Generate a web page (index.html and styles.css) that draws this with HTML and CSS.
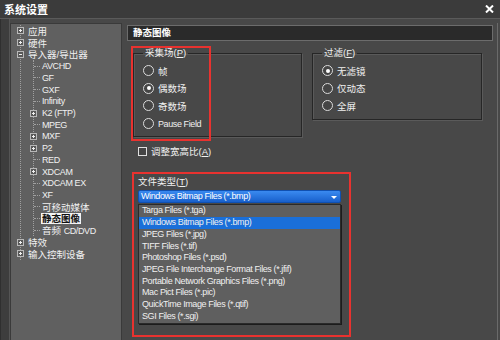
FILE: index.html
```html
<!DOCTYPE html>
<html lang="zh-CN">
<head>
    <meta charset="UTF-8">
    <title>系统设置</title>
    <link rel="stylesheet" href="styles.css">
</head>
<body>
    <div class="window">
        <div class="titlebar">
            <span class="title">系统设置</span>
            <svg class="close" width="9" height="8" viewBox="0 0 9 8"><path d="M1 0.5l7 7M8 0.5l-7 7" stroke="#fff" stroke-width="2"/></svg>
        </div>

        <div class="main">
            <div class="side"></div>

            <div class="tree-panel">
                <div class="tree-root">
                    <div class="node"><span class="exp plus"></span><span class="label">应用</span></div>
                    <div class="node"><span class="exp plus"></span><span class="label">硬件</span></div>
                    <div class="node"><span class="exp minus"></span><span class="label">导入器/导出器</span></div>
                    <div class="children">
                        <div class="leaf"><span class="label en">AVCHD</span></div>
                        <div class="leaf"><span class="label en">GF</span></div>
                        <div class="leaf"><span class="label en">GXF</span></div>
                        <div class="leaf"><span class="label en">Infinity</span></div>
                        <div class="node sub"><span class="exp plus"></span><span class="label en">K2 (FTP)</span></div>
                        <div class="leaf"><span class="label en">MPEG</span></div>
                        <div class="node sub"><span class="exp plus"></span><span class="label en">MXF</span></div>
                        <div class="node sub"><span class="exp plus"></span><span class="label en">P2</span></div>
                        <div class="leaf"><span class="label en">RED</span></div>
                        <div class="node sub"><span class="exp plus"></span><span class="label en">XDCAM</span></div>
                        <div class="leaf"><span class="label en">XDCAM EX</span></div>
                        <div class="leaf"><span class="label en">XF</span></div>
                        <div class="leaf"><span class="label">可移动媒体</span></div>
                        <div class="leaf"><span class="label selected">静态图像</span></div>
                        <div class="leaf"><span class="label">音频 <span class="en">CD/DVD</span></span></div>
                    </div>
                    <div class="node"><span class="exp plus"></span><span class="label">特效</span></div>
                    <div class="node"><span class="exp plus"></span><span class="label">输入控制设备</span></div>
                </div>
            </div>

            <div class="panel">
                <div class="panel-header">静态图像</div>

                <div class="groups">
                    <fieldset class="group group-field">
                        <legend>采集场(<u>P</u>)</legend>
                        <div class="radio"><span class="dot"></span>帧</div>
                        <div class="radio"><span class="dot on"></span>偶数场</div>
                        <div class="radio"><span class="dot"></span>奇数场</div>
                        <div class="radio"><span class="dot"></span><span class="en">Pause Field</span></div>
                    </fieldset>
                    <fieldset class="group group-filter">
                        <legend>过滤(<u>F</u>)</legend>
                        <div class="radio"><span class="dot on"></span>无滤镜</div>
                        <div class="radio"><span class="dot"></span>仅动态</div>
                        <div class="radio"><span class="dot"></span>全屏</div>
                    </fieldset>
                </div>

                <div class="check"><span class="box"></span>调整宽高比(<u>A</u>)</div>

                <div class="filetype">
                    <div class="filetype-label">文件类型(<u>T</u>)</div>
                    <div class="select"><span class="en">Windows Bitmap Files (*.bmp)</span><span class="arrow"></span></div>
                    <ul class="options">
                        <li class="en">Targa Files (*.tga)</li>
                        <li class="en active">Windows Bitmap Files (*.bmp)</li>
                        <li class="en">JPEG Files (*.jpg)</li>
                        <li class="en">TIFF Files (*.tif)</li>
                        <li class="en">Photoshop Files (*.psd)</li>
                        <li class="en">JPEG File Interchange Format Files (*.jfif)</li>
                        <li class="en">Portable Network Graphics Files (*.png)</li>
                        <li class="en">Mac Pict Files (*.pic)</li>
                        <li class="en">QuickTime Image Files (*.qtif)</li>
                        <li class="en">SGI Files (*.sgi)</li>
                    </ul>
                </div>

                <!-- red annotation frames -->
                <div class="mark mark-field"></div>
                <div class="mark mark-type"></div>
            </div>
        </div>
    </div>
</body>
</html>
```

FILE: styles.css
```css
body {
    margin: 0;
    background-color: #484848;
    color: #f0f0f0;
    font-family: "Liberation Sans", "Noto Sans CJK SC", sans-serif;
    font-size: 9.5px;
}
u {
    text-decoration: underline;
}
.en {
    font-size: 9px;
    letter-spacing: -0.4px;
}
.window {
    width: 500px;
    height: 340px;
    overflow: hidden;
    display: flex;
    flex-direction: column;
}
.titlebar {
    height: 18px;
    flex-shrink: 0;
    background-color: #3b3b3b;
    border-bottom: 1px solid #5a5a5a;
    display: flex;
    align-items: center;
    justify-content: space-between;
    padding: 0 6px 0 4px;
}
.title {
    font-weight: bold;
    font-size: 11px;
    color: #fff;
}
.close {
    margin-top: -1px;
}
.main {
    flex: 1;
    display: flex;
    padding-top: 4px;
    padding-right: 2px;
    background-color: #484848;
}
.side {
    width: 8px;
    margin-top: -4px;
    background-color: #3d3d3d;
    border-right: 1px solid #555;
    border-left: 1px solid #2f2f2f;
}

/* tree */
.tree-panel {
    width: 110px;
    background-color: #606060;
    border: 1px solid #3a3a3a;
    border-bottom: none;
    padding-top: 1px;
}
.tree-root {
    margin-left: 9px;
    border-left: 1px dotted #a0a0a0;
    margin-top: 5px;
    width: 95px;
}
.node, .leaf {
    height: 11.74px;
    display: flex;
    align-items: center;
    white-space: nowrap;
}
.tree-root > .node:first-child {
    margin-top: -5px;
}
.exp {
    width: 5px;
    height: 5px;
    flex-shrink: 0;
    margin-left: -4px;
    margin-right: 4px;
    border: 1px solid #b8b8b8;
    background-color: #585858;
    position: relative;
}
.exp::before {
    content: "";
    position: absolute;
    left: 1px;
    top: 2px;
    width: 3px;
    height: 1px;
    background-color: #f0f0f0;
}
.exp.plus::after {
    content: "";
    position: absolute;
    left: 2px;
    top: 1px;
    width: 1px;
    height: 3px;
    background-color: #f0f0f0;
}
.children {
    margin-left: 12px;
    border-left: 1px dotted #a0a0a0;
}
.sub .exp {
    margin-left: -4px;
    margin-right: 5px;
}
.leaf::before {
    content: "";
    width: 6px;
    border-top: 1px dotted #a0a0a0;
    margin-right: 2px;
}
.label.selected {
    background-color: #f4f4f4;
    color: #111;
    font-weight: bold;
    padding: 0 1px;
    margin-left: -1px;
    line-height: 11px;
}

/* right panel */
.panel {
    flex: 1;
    position: relative;
    padding: 2px 4px 0 5px;
    border-right: 1px solid #6a6a6a;
}
.panel-header {
    height: 14px;
    line-height: 14px;
    background-color: #2a2a2a;
    border: 1px solid #6c6c6c;
    padding-left: 5px;
    font-weight: bold;
    color: #fff;
}
.groups {
    display: flex;
    align-items: flex-start;
    gap: 10px;
    margin: 6px 0 0 6px;
}
.group {
    margin: 0;
    padding: 3px 0 4px 9px;
    border: 1px solid #262626;
    box-shadow: 1px 1px 0 #5a5a5a, inset 1px 1px 0 #5a5a5a;
    min-width: 0;
}
.group legend {
    padding: 0 2px;
    line-height: 12px;
}
.group-field {
    width: 158px;
}
.group-filter {
    width: 159px;
}
.radio {
    height: 17.6px;
    display: flex;
    align-items: center;
}
.dot {
    width: 9px;
    height: 9px;
    border: 1px solid #dcdcdc;
    border-radius: 50%;
    background-color: #454545;
    margin-right: 4px;
    display: flex;
    align-items: center;
    justify-content: center;
}
.dot.on::after {
    content: "";
    width: 4px;
    height: 4px;
    border-radius: 50%;
    background-color: #fff;
}
.check {
    display: flex;
    align-items: center;
    height: 12px;
    margin: 8px 0 0 11px;
}
.box {
    width: 7px;
    height: 7px;
    border: 1px solid #e0e0e0;
    background-color: #454545;
    margin-right: 4px;
}
.filetype {
    margin: 19px 0 0 11px;
    width: 203px;
}
.filetype-label {
    height: 12px;
    line-height: 12px;
    margin-bottom: 2px;
}
.select {
    height: 11px;
    line-height: 11px;
    padding-left: 2px;
    background: linear-gradient(#3a8af0, #1860cc);
    border: 1px solid #1050b0;
    border-radius: 2px;
    color: #fff;
    display: flex;
    justify-content: space-between;
    align-items: center;
}
.arrow {
    width: 0;
    height: 0;
    border-left: 3px solid transparent;
    border-right: 3px solid transparent;
    border-top: 3px solid #fff;
    margin-right: 3px;
    margin-top: 1px;
}
.options {
    list-style: none;
    margin: 1px 0 0 0;
    padding: 0;
    background-color: #5f5f5f;
    border: 1px solid #2a2a2a;
    box-shadow: 1px 1px 0 #1c1c1c;
}
.options li {
    height: 11.73px;
    line-height: 11.73px;
    padding-left: 3px;
    white-space: nowrap;
}
.options li.active {
    background-color: #1a6fd9;
}
.mark {
    position: absolute;
    border: 2px solid #e8322f;
}
.mark-field {
    left: 9px;
    top: 23px;
    width: 76px;
    height: 91px;
}
.mark-type {
    left: 10px;
    top: 149px;
    width: 215px;
    height: 161px;
}
```
